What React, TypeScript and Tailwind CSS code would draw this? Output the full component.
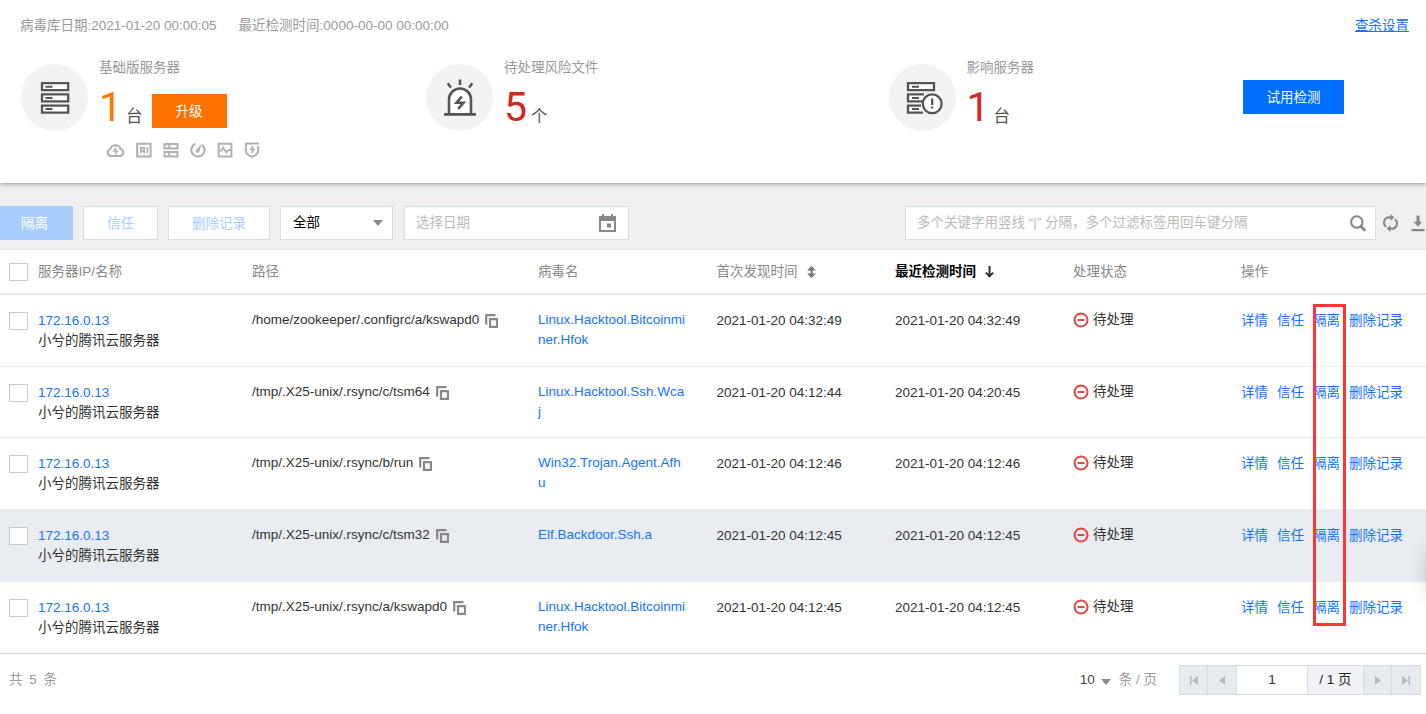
import React from "react";

const records = [
  {
    ip: "172.16.0.13",
    name: "小兮的腾讯云服务器",
    path: "/home/zookeeper/.configrc/a/kswapd0",
    virus: ["Linux.Hacktool.Bitcoinmi", "ner.Hfok"],
    firstTime: "2021-01-20 04:32:49",
    lastTime: "2021-01-20 04:32:49",
    active: false,
  },
  {
    ip: "172.16.0.13",
    name: "小兮的腾讯云服务器",
    path: "/tmp/.X25-unix/.rsync/c/tsm64",
    virus: ["Linux.Hacktool.Ssh.Wca", "j"],
    firstTime: "2021-01-20 04:12:44",
    lastTime: "2021-01-20 04:20:45",
    active: false,
  },
  {
    ip: "172.16.0.13",
    name: "小兮的腾讯云服务器",
    path: "/tmp/.X25-unix/.rsync/b/run",
    virus: ["Win32.Trojan.Agent.Afh", "u"],
    firstTime: "2021-01-20 04:12:46",
    lastTime: "2021-01-20 04:12:46",
    active: false,
  },
  {
    ip: "172.16.0.13",
    name: "小兮的腾讯云服务器",
    path: "/tmp/.X25-unix/.rsync/c/tsm32",
    virus: ["Elf.Backdoor.Ssh.a"],
    firstTime: "2021-01-20 04:12:45",
    lastTime: "2021-01-20 04:12:45",
    active: true,
  },
  {
    ip: "172.16.0.13",
    name: "小兮的腾讯云服务器",
    path: "/tmp/.X25-unix/.rsync/a/kswapd0",
    virus: ["Linux.Hacktool.Bitcoinmi", "ner.Hfok"],
    firstTime: "2021-01-20 04:12:45",
    lastTime: "2021-01-20 04:12:45",
    active: false,
  },
];

const columns =
  "grid grid-cols-[38px_214px_286px_178.5px_178.5px_178px_168px_1fr]";

const ServerIcon = () => (
  <svg width="30" height="34" viewBox="0 0 30 34" fill="#fff" stroke="#555" strokeWidth="2.3">
    <path d="M2 2.2h26.2v7H2zM2 13.4h26.2v7H2zM2 24.6h26.2v7H2z" />
    <path d="M5.5 5.7h7M5.5 16.9h7M5.5 28.1h7" strokeWidth="2" />
  </svg>
);

const AlarmIcon = () => (
  <svg width="34" height="40" viewBox="0 0 34 40" fill="none" stroke="#555" strokeWidth="2.6">
    <path d="M6 36V21.5a11 11 0 0 1 22 0V36" fill="#fff" />
    <path d="M1 36.4h32M17 1.5v5.5M4.7 5.3l3.2 4.2M29.3 5.3l-3.2 4.2" />
    <path d="M18.8 18.5l-5.3 6.3h7l-5.3 6" strokeWidth="2.6" />
  </svg>
);

const ServerAlertIcon = () => (
  <svg width="38" height="34" viewBox="0 0 38 34" fill="#fff" stroke="#555" strokeWidth="2.3">
    <path d="M3 2.2h26v7H3z" />
    <path d="M19 13.4H3v7h14M16 24.6H3v7h15" />
    <path d="M7 5.7h7M7 16.9h7M7 28.1h7" strokeWidth="2" />
    <circle cx="27.2" cy="22.8" r="9.4" />
    <path d="M27.2 17.6v6.4M27.2 25.6v2" />
  </svg>
);

const featureIcons = [
  <svg key="cloud" width="19" height="16" viewBox="0 0 20 16" fill="none" stroke="#b0b0b0" strokeWidth="2.1">
    <path d="M5 14.2a3.6 3.6 0 0 1-.4-7.1 5.6 5.6 0 0 1 10.8 0 3.6 3.6 0 0 1-.4 7.1z" />
    <path d="M10.6 5.5L8.4 9h3.4l-2.2 3.6" strokeWidth="1.7" />
  </svg>,
  <svg key="ai" width="16" height="16" viewBox="0 0 16 16" fill="none" stroke="#b0b0b0" strokeWidth="2">
    <path d="M1.2 1.8h13.4v12.6H1.2z" />
    <path d="M4.8 11.2V5.8h3.4v5.4M4.8 8.8h3.4M11.4 5v6.2" strokeWidth="1.7" />
  </svg>,
  <svg key="server" width="16" height="16" viewBox="0 0 16 16" fill="none" stroke="#b0b0b0" strokeWidth="2">
    <path d="M1.5 2h13v4.4h-13zM1.5 10h13v4.4h-13zM6.2 2v4M6.2 10v4" />
  </svg>,
  <svg key="gauge" width="16" height="16" viewBox="0 0 16 16" fill="none" stroke="#b0b0b0" strokeWidth="2.1">
    <path d="M5.4 1.8a6.6 6.6 0 1 0 6.8 1.1" />
    <path d="M11.8 1.2L9.6 8.8a1.9 1.9 0 1 1-2.9-1.4z" fill="#b0b0b0" stroke="none" />
  </svg>,
  <svg key="pulse" width="16" height="16" viewBox="0 0 16 16" fill="none" stroke="#b0b0b0" strokeWidth="2">
    <path d="M1.6 1.8h12.8v12.6H1.6z" />
    <path d="M2 8.6h2.3l2-3.2 3 5 2-2.2H14" strokeWidth="1.8" />
  </svg>,
  <svg key="shield" width="16" height="16" viewBox="0 0 16 16" fill="none" stroke="#b0b0b0" strokeWidth="2">
    <path d="M15 1.6H1.9v7.2c0 3 3 4.9 6.2 6 3.2-1.1 6-3 6-6V4" />
    <path d="M9.1 4L6.9 7.4h2.8l-2 3.4" strokeWidth="1.7" />
  </svg>,
];

const CopyIcon = () => (
  <svg width="13" height="14" viewBox="0 0 13 14" fill="none" stroke="#888" strokeWidth="2">
    <path d="M1.2 10.5V1.2h9.3" strokeWidth="2.2" />
    <path d="M5 5.2h7v7.6H5z" strokeWidth="2.2" />
  </svg>
);

const StatusIcon = () => (
  <svg width="16" height="16" viewBox="0 0 16 16" fill="none" stroke="#e54545" strokeWidth="2">
    <circle cx="8" cy="8" r="6.5" />
    <path d="M4.7 8h6.6" />
  </svg>
);

const Checkbox = () => (
  <span className="block w-[19px] h-[18px] bg-white border border-[#c8c8c8]" />
);

type StatProps = {
  icon: React.ReactNode;
  label: string;
  value: number;
  unit: string;
  color: string;
  children?: React.ReactNode;
};

const Stat = ({ icon, label, value, unit, color, children }: StatProps) => (
  <div className="flex">
    <div className="w-[67px] h-[67px] mt-1 rounded-full bg-[#f3f3f3] flex items-center justify-center shrink-0">
      {icon}
    </div>
    <div className="ml-[11px]">
      <p className="h-[16px] leading-[16px] text-[#999]">{label}</p>
      <div className="flex h-[52px] mt-[5px]">
        <span className={`w-[22px] text-[41px] leading-[52px] font-[Roboto] ${color}`}>
          {value}
        </span>
        <span className="ml-[5px] mt-[21px] text-[16.5px] leading-[28px] text-[#555]">
          {unit}
        </span>
        {children}
      </div>
    </div>
  </div>
);

const pageCell =
  "flex items-center justify-center bg-[#e7eaef] border-r border-[#d5dae3]";

const App = () => {
  return (
    <div className="relative w-full h-[714px] overflow-hidden bg-white text-[13.5px] text-[#333] whitespace-nowrap font-['Liberation_Sans','Noto_Sans_CJK_SC',sans-serif]">
      <section className="relative z-10 h-[183px] bg-white shadow-[0_1px_4px_rgba(0,10,20,0.4)]">
        <div className="flex justify-between pt-4 pl-5 pr-[17px] leading-5 text-[#999]">
          <div className="flex gap-[22px]">
            <span>病毒库日期:2021-01-20 00:00:05</span>
            <span>最近检测时间:0000-00-00 00:00:00</span>
          </div>
          <a className="text-[#1473ff] underline underline-offset-1">查杀设置</a>
        </div>

        <div className="grid grid-cols-[405px_462.5px_354.5px_1fr] pl-[21px] mt-6">
          <div>
            <Stat
              icon={<ServerIcon />}
              label="基础版服务器"
              value={1}
              unit="台"
              color="text-[#ff7800]"
            >
              <button className="ml-[9px] mt-[13px] pt-[2px] w-[75px] h-[34px] bg-[#ff7200] text-white">
                升级
              </button>
            </Stat>
            <div className="flex gap-[11px] ml-[85px] mt-[9px]">{featureIcons}</div>
          </div>
          <Stat
            icon={<AlarmIcon />}
            label="待处理风险文件"
            value={5}
            unit="个"
            color="text-[#d2281e]"
          />
          <Stat
            icon={
              <span className="ml-1">
                <ServerAlertIcon />
              </span>
            }
            label="影响服务器"
            value={1}
            unit="台"
            color="text-[#d2281e]"
          />
          <button className="mt-5 pt-[2px] w-[101px] h-[34px] bg-[#006eff] text-white">
            试用检测
          </button>
        </div>
      </section>

      <section className="flex h-[67px] pt-[23px] bg-[#f0f0f0] border-b border-[#e9e9e9]">
        <button className="w-[73px] h-[34px] pr-1 pt-[2px] bg-[#a9cdff] text-white">隔离</button>
        <button className="w-[75px] h-[34px] pt-[2px] ml-[10px] bg-white border border-[#d5dce6] text-[#a9cdff]">
          信任
        </button>
        <button className="w-[102px] h-[34px] pt-[2px] ml-[10px] bg-white border border-[#d5dce6] text-[#a9cdff]">
          删除记录
        </button>
        <div className="flex items-center justify-between w-[113px] h-[34px] ml-[10px] pl-3 pr-[9px] bg-white border border-[#d5dce6] text-black">
          <span>全部</span>
          <svg width="10" height="6" viewBox="0 0 10 6" fill="#888">
            <path d="M0 0h10L5 6z" />
          </svg>
        </div>
        <div className="flex items-center justify-between w-[225px] h-[34px] ml-[11px] pl-[11px] pr-[12px] bg-white border border-[#d5dce6] text-[#bbb]">
          <span>选择日期</span>
          <svg width="17" height="18" viewBox="0 0 17 18" fill="#888">
            <path d="M3 0h2v2h7V0h2v2h3v16H0V2h3zM2 7v9h13V7z" fillRule="evenodd" />
            <path d="M8 9.5h4v4H8z" />
          </svg>
        </div>
        <div className="flex items-center justify-between w-[471px] h-[34px] ml-[276px] pl-[11px] pr-[9px] bg-white border border-[#d5dce6] text-[#bbb]">
          <span>多个关键字用竖线 “|” 分隔，多个过滤标签用回车键分隔</span>
          <svg width="16" height="17" viewBox="0 0 16 17" fill="none" stroke="#888" strokeWidth="2.1">
            <circle cx="6.8" cy="7" r="5.7" />
            <path d="M10.8 11.2l4.4 4.6" strokeWidth="2.8" />
          </svg>
        </div>
        <div className="flex items-center h-[34px] ml-[7px] gap-[13px]">
          <svg width="15" height="18" viewBox="0 0 15 18" fill="none" stroke="#888" strokeWidth="2">
            <path d="M8.5 3.4H6.8A5.2 5.2 0 0 0 3.2 12.8M6.5 14.6h1.7A5.2 5.2 0 0 0 11.8 5.2" />
            <path d="M7.5 0v6.8l3.8-3.4zM7.5 18v-6.8l-3.8 3.4z" fill="#888" stroke="none" />
          </svg>
          <svg width="14" height="17" viewBox="0 0 14 17" fill="#888" className="shrink-0">
            <path d="M5.5 0.5h3v6.2h2.8L7 11.8 2.7 6.7h2.8zM0.5 14h13v2.2H.5z" />
          </svg>
        </div>
      </section>

      <div className={`${columns} items-center h-[45px] pt-px border-b-2 border-[#e5e8ef] text-[#888]`}>
        <div className="pl-[9px]">
          <Checkbox />
        </div>
        <span>服务器IP/名称</span>
        <span>路径</span>
        <span>病毒名</span>
        <div className="flex items-center gap-[9px]">
          <span>首次发现时间</span>
          <svg width="9" height="12" viewBox="0 0 9 12" fill="#777">
            <path d="M4.5 0L9 4.6H5.6v2.8H9L4.5 12 0 7.4h3.4V4.6H0z" />
          </svg>
        </div>
        <div className="flex items-center gap-[9px] font-bold text-black">
          <span>最近检测时间</span>
          <svg width="9" height="12" viewBox="0 0 9 12" fill="none" stroke="#333" strokeWidth="2">
            <path d="M4.5 0v10M.9 6.6l3.6 3.8 3.6-3.8" />
          </svg>
        </div>
        <span>处理状态</span>
        <span>操作</span>
      </div>

      <div className="border-b border-[#d5d8e0]">
        {records.map((record, i) => (
          <div
            key={i}
            className={`${columns} h-[71.7px] pt-[15px] leading-5 border-b border-[#ececec] last:border-b-0 ${
              record.active ? "bg-[#e9ecf1]" : ""
            }`}
          >
            <div className="pl-[9px] pt-[2px]">
              <Checkbox />
            </div>
            <div className="pt-px">
              <p className="text-[#1473ff]">{record.ip}</p>
              <p>{record.name}</p>
            </div>
            <div className="flex gap-[6px]">
              <span>{record.path}</span>
              <span className="pt-1">
                <CopyIcon />
              </span>
            </div>
            <div className="text-[#1473ff]">
              {record.virus.map((line) => (
                <p key={line}>{line}</p>
              ))}
            </div>
            <span className="pt-px">{record.firstTime}</span>
            <span className="pt-px">{record.lastTime}</span>
            <div className="flex gap-1">
              <span className="pt-[2px]">
                <StatusIcon />
              </span>
              <span>待处理</span>
            </div>
            <div className="flex gap-[9px] pt-px text-[#1473ff]">
              <a>详情</a>
              <a>信任</a>
              <a>隔离</a>
              <a>删除记录</a>
            </div>
          </div>
        ))}
      </div>

      <footer className="flex justify-between pt-[11px] pl-[9px] pr-[5px] text-[#999]">
        <span className="leading-[29px] [word-spacing:3px]">共 5 条</span>
        <div className="flex items-center">
          <span className="text-[#444]">10</span>
          <svg width="10" height="6" viewBox="0 0 10 6" fill="#888" className="ml-[6px] mt-1">
            <path d="M0 0h10L5 6z" />
          </svg>
          <span className="ml-2">条 / 页</span>
          <div className="flex h-[30px] ml-[22px] border border-r-0 border-[#d5dae3]">
            <div className={`${pageCell} w-[28px]`}>
              <svg width="8" height="9" viewBox="0 0 8 9" fill="#b5b9c0">
                <path d="M0 0h1.5v9H0zM8 0v9L2 4.5z" />
              </svg>
            </div>
            <div className={`${pageCell} w-[29px]`}>
              <svg width="6" height="9" viewBox="0 0 6 9" fill="#b5b9c0">
                <path d="M6 0v9L0 4.5z" />
              </svg>
            </div>
            <div className="flex items-center justify-center w-[71px] bg-white border-r border-[#d5dae3] text-[#333]">
              1
            </div>
            <div className="flex items-center justify-center w-[56px] bg-[#f2f3f7] border-r border-[#d5dae3] text-[#222]">
              / 1 页
            </div>
            <div className={`${pageCell} w-[28px]`}>
              <svg width="6" height="9" viewBox="0 0 6 9" fill="#b5b9c0">
                <path d="M0 0v9l6-4.5z" />
              </svg>
            </div>
            <div className={`${pageCell} w-[29px]`}>
              <svg width="8" height="9" viewBox="0 0 8 9" fill="#b5b9c0">
                <path d="M8 0H6.5v9H8zM0 0v9l6-4.5z" />
              </svg>
            </div>
          </div>
        </div>
      </footer>

      {/* highlight around the isolate links */}
      <div className="absolute left-[1313px] top-[304px] w-[33px] h-[322px] border-3 border-[#fd3535]" />
      {/* shadow of the floating button that sits past the right edge */}
      <div className="absolute left-[1428px] top-[548px] w-10 h-[40px] shadow-[0_3px_20px_rgba(0,0,0,0.2)]" />
    </div>
  );
};

export default App;
